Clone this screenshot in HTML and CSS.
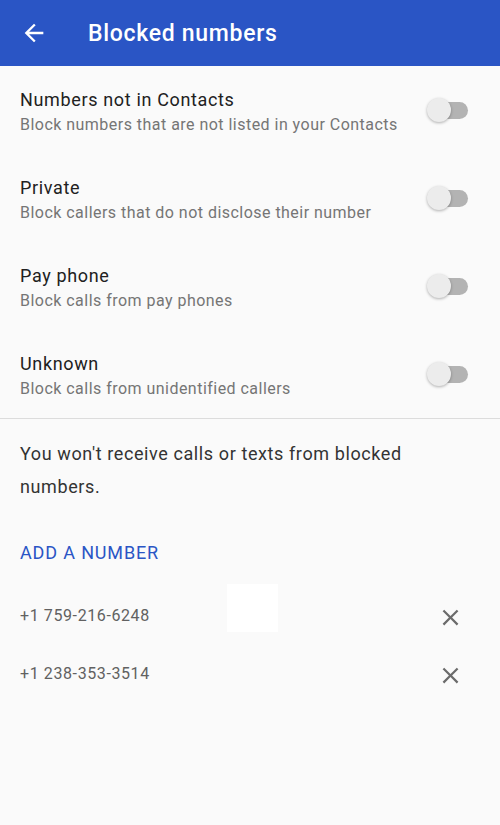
FILE: index.html
```html
<!DOCTYPE html>
<html lang="en">
<head>
<meta charset="utf-8">
<title>Blocked numbers</title>
<link rel="stylesheet" href="styles.css">
</head>
<body>
<header class="appbar">
  <button class="appbar-back" aria-label="Back">
    <svg viewBox="0 0 24 24" width="28" height="28"><path d="M20 11H7.83l5.59-5.59L12 4l-8 8 8 8 1.41-1.41L7.83 13H20v-2z" fill="#fff"/></svg>
  </button>
  <h1 class="appbar-title">Blocked numbers</h1>
</header>

<main class="content">
  <ul class="settings">
    <li class="setting">
      <div class="setting-text">
        <div class="setting-title">Numbers not in Contacts</div>
        <div class="setting-sub">Block numbers that are not listed in your Contacts</div>
      </div>
      <span class="switch"><span class="switch-thumb"></span></span>
    </li>
    <li class="setting">
      <div class="setting-text">
        <div class="setting-title">Private</div>
        <div class="setting-sub">Block callers that do not disclose their number</div>
      </div>
      <span class="switch"><span class="switch-thumb"></span></span>
    </li>
    <li class="setting">
      <div class="setting-text">
        <div class="setting-title">Pay phone</div>
        <div class="setting-sub">Block calls from pay phones</div>
      </div>
      <span class="switch"><span class="switch-thumb"></span></span>
    </li>
    <li class="setting">
      <div class="setting-text">
        <div class="setting-title">Unknown</div>
        <div class="setting-sub">Block calls from unidentified callers</div>
      </div>
      <span class="switch"><span class="switch-thumb"></span></span>
    </li>
  </ul>

  <p class="note">You won't receive calls or texts from blocked numbers.</p>

  <a class="add-number" href="#">ADD A NUMBER</a>

  <ul class="blocked">
    <li class="blocked-item">
      <span class="blocked-number">+1 759-216-6248</span>
      <button class="blocked-remove" aria-label="Unblock">
        <svg viewBox="0 0 24 24" width="27" height="27"><path d="M19 6.41L17.59 5 12 10.59 6.41 5 5 6.41 10.59 12 5 17.59 6.41 19 12 13.41 17.59 19 19 17.59 13.41 12z" fill="#6b6b6b"/></svg>
      </button>
    </li>
    <li class="blocked-item">
      <span class="blocked-number">+1 238-353-3514</span>
      <button class="blocked-remove" aria-label="Unblock">
        <svg viewBox="0 0 24 24" width="27" height="27"><path d="M19 6.41L17.59 5 12 10.59 6.41 5 5 6.41 10.59 12 5 17.59 6.41 19 12 13.41 17.59 19 19 17.59 13.41 12z" fill="#6b6b6b"/></svg>
      </button>
    </li>
  </ul>

  <div class="ripple-patch"></div>
</main>
</body>
</html>
```

FILE: styles.css
```css
* { box-sizing: border-box; }

html, body {
  margin: 0;
  padding: 0;
  height: 100%;
}

body {
  background: #fafafa;
  font-family: Roboto, "Noto Sans", sans-serif;
  -webkit-font-smoothing: antialiased;
}

/* top app bar */
.appbar {
  height: 66px;
  background: #2a55c5;
  display: flex;
  align-items: center;
}

.appbar-back {
  border: 0;
  background: none;
  padding: 0;
  margin-left: 20px;
  width: 28px;
  height: 28px;
  display: flex;
}

.appbar-title {
  margin: 0 0 0 40px;
  color: #fff;
  font-size: 23px;
  font-weight: 500;
  letter-spacing: 0.7px;
}

.content {
  position: relative;
}

/* toggle settings */
.settings {
  list-style: none;
  margin: 0;
  padding: 0;
  border-bottom: 1px solid #dcdcdc;
}

.setting {
  height: 88px;
  display: flex;
  align-items: center;
  padding: 0 32px 0 20px;
}

.setting-text {
  flex: 1;
  padding-top: 4px;
}

.setting-title {
  font-size: 18px;
  line-height: 22px;
  color: #212121;
  letter-spacing: 0.65px;
}

.setting-sub {
  margin-top: 3px;
  font-size: 16px;
  line-height: 22px;
  color: #757575;
  letter-spacing: 0.47px;
}

.switch {
  position: relative;
  width: 40px;
  height: 17px;
  border-radius: 9px;
  background: #b3b3b3;
}

.switch-thumb {
  position: absolute;
  left: -1px;
  top: -4px;
  width: 24px;
  height: 24px;
  border-radius: 50%;
  background: #ececec;
  box-shadow: 0 1px 3px rgba(0, 0, 0, 0.3);
}

/* explanation */
.note {
  margin: 18px 0 0;
  padding: 0 70px 0 20px;
  font-size: 18px;
  line-height: 33px;
  color: #333;
  letter-spacing: 0.6px;
}

.add-number {
  display: block;
  margin: 38px 0 0 20px;
  font-size: 18px;
  line-height: 24px;
  color: #2a55c5;
  text-decoration: none;
  letter-spacing: 0.85px;
}

/* blocked list */
.blocked {
  list-style: none;
  margin: 21px 0 0;
  padding: 0;
}

.blocked-item {
  height: 58px;
  display: flex;
  align-items: center;
  padding: 0 36px 0 20px;
}

.blocked-number {
  flex: 1;
  font-size: 16px;
  color: #616161;
  letter-spacing: 0.6px;
}

.blocked-remove {
  border: 0;
  background: none;
  padding: 0;
  width: 27px;
  height: 27px;
  display: flex;
  margin-top: 4px;
}

.ripple-patch {
  position: absolute;
  left: 227px;
  top: 518px;
  width: 51px;
  height: 48px;
  background: #fff;
}
```
